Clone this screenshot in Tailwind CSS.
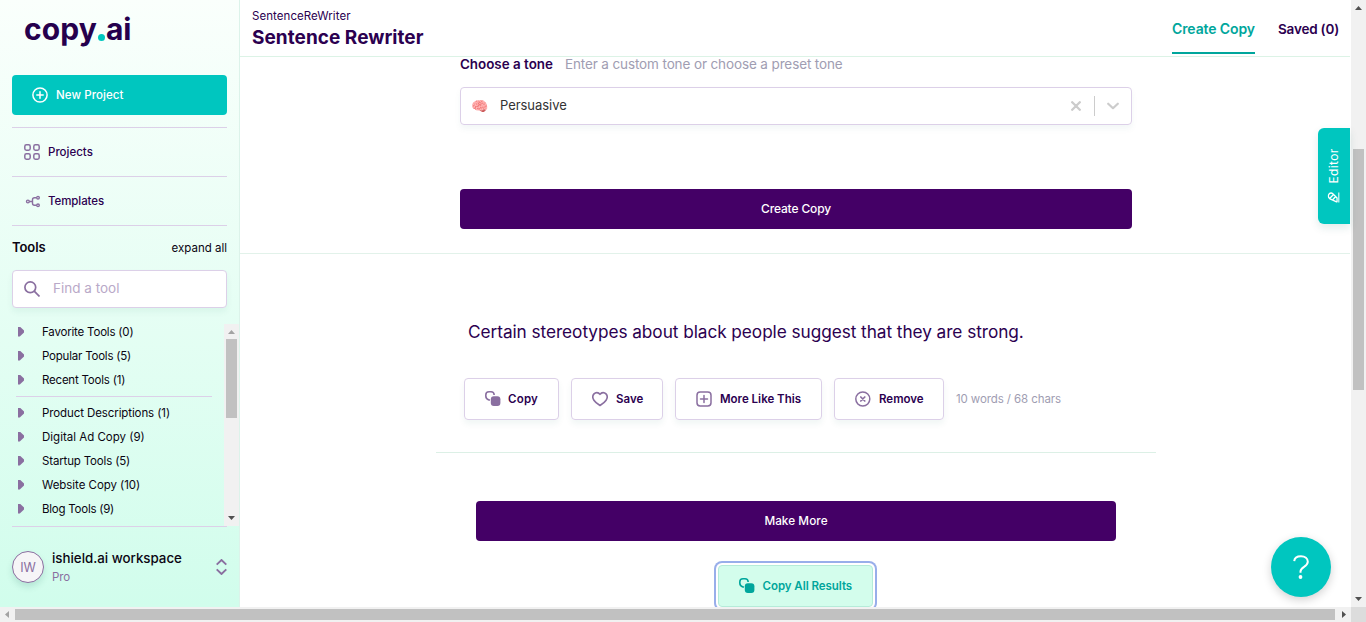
<!DOCTYPE html>
<html lang="en">
<head>
<meta charset="utf-8">
<title>Sentence Rewriter</title>
<script src="https://cdn.jsdelivr.net/npm/@tailwindcss/browser@4"></script>
</head>
<body class="h-[622px] w-[1366px] overflow-hidden bg-white font-[Inter,sans-serif] text-[11.5px] text-[#2b0050]">
<div class="flex h-[607px]">

  <!-- Sidebar -->
  <aside class="flex w-60 shrink-0 flex-col border-r border-[#dcf3ea] bg-linear-to-b from-[#fafffc] to-[#d1fdec] pl-3">
    <div class="flex h-[75px] items-start pl-3 pt-[11px] text-[30px] leading-9 font-bold text-[#26004d]">
      <span class="tracking-[0.13px]">copy</span><span class="mt-[23px] ml-[1px] h-[7px] w-[7px] rounded-full bg-[#00c7be]"></span><span class="ml-[1px] tracking-[-0.3px]">ai</span>
    </div>
    <button class="mr-3 flex h-10 w-[215px] shrink-0 items-center rounded bg-[#00c6bf] pl-5 font-medium tracking-[0.08px] text-white">
      <svg class="mr-2 h-4 w-4" viewBox="0 0 16 16" fill="none" stroke="currentColor" stroke-width="1.5" stroke-linecap="round"><circle cx="8" cy="8" r="7.1"/><path d="M8 4.8v6.4M4.8 8h6.4"/></svg>
      <span class="pt-0.5">New Project</span>
    </button>
    <nav class="mt-3 w-[215px] font-medium">
      <a class="flex h-[49px] items-center border-t border-[#dcd0e8] pl-3">
        <svg class="mr-2 h-4 w-4 text-[#8a6fa0]" viewBox="0 0 16 16" fill="none" stroke="currentColor" stroke-width="1.5"><rect x=".8" y=".8" width="5.4" height="5.4" rx="1.6"/><rect x="9.8" y=".8" width="5.4" height="5.4" rx="1.6"/><rect x=".8" y="9.8" width="5.4" height="5.4" rx="1.6"/><rect x="9.8" y="9.8" width="5.4" height="5.4" rx="1.6"/></svg>
        <span class="pt-0.5">Projects</span>
      </a>
      <a class="flex h-[49px] items-center border-t border-[#dcd0e8] pl-3 tracking-[-0.09px]">
        <svg class="mr-2 h-4 w-4 text-[#8a6fa0]" viewBox="0 0 16 16" fill="none" stroke="currentColor" stroke-width="1.4"><circle cx="3.9" cy="8.5" r="1.4"/><circle cx="14" cy="4.7" r="1.3"/><circle cx="14" cy="12.3" r="1.3"/><path d="M5.4 8.5h3.1M12.6 4.700H10.500q-2 0-2 2v3.600q0 2 2 2h2.100"/></svg>
        <span class="pt-0.5">Templates</span>
      </a>
    </nav>
    <div class="flex h-[45px] w-[215px] shrink-0 items-center justify-between border-t border-[#dcd0e8] text-[#0b0512]">
      <h2 class="text-[13px] font-semibold tracking-[-0.09px]">Tools</h2>
      <span class="pt-0.5">expand all</span>
    </div>
    <div class="flex h-[38px] w-[215px] shrink-0 items-center rounded border border-[#dcd0e8] bg-white pl-[11px] text-[13.500px] text-[#b9a9c8] shadow-[0_4px_6px_rgba(20,100,90,0.06)]">
      <svg class="mr-[13px] h-4 w-4 text-[#8a6fa0]" viewBox="0 0 16 16" fill="none" stroke="currentColor" stroke-width="1.7"><circle cx="6.300" cy="6.300" r="5.400"/><path d="M10.200 10.200l5.300 5.300"/></svg>
      <span class="pb-0.5">Find a tool</span>
    </div>
    <div class="mt-4 flex h-[202px] shrink-0 text-[#0b0512]">
      <ul class="w-[212px] overflow-hidden">
        <li class="-mt-1 flex h-6 items-center pl-[6px]"><span class="mr-[18px] mb-px h-[10px] w-[6px] bg-[#8a6fa0] [clip-path:polygon(0_0,30%_0,100%_40%,100%_60%,30%_100%,0_100%)]"></span><span class="pt-0.5 tracking-[-0.19px]">Favorite Tools (0)</span></li>
        <li class="flex h-6 items-center pl-[6px]"><span class="mr-[18px] mb-px h-[10px] w-[6px] bg-[#8a6fa0] [clip-path:polygon(0_0,30%_0,100%_40%,100%_60%,30%_100%,0_100%)]"></span><span class="pt-0.5 tracking-[-0.21px]">Popular Tools (5)</span></li>
        <li class="flex h-6 items-center pl-[6px]"><span class="mr-[18px] mb-px h-[10px] w-[6px] bg-[#8a6fa0] [clip-path:polygon(0_0,30%_0,100%_40%,100%_60%,30%_100%,0_100%)]"></span><span class="pt-0.5 tracking-[-0.21px]">Recent Tools (1)</span></li>
        <li class="mt-1 mb-1 ml-1 h-px w-[196px] bg-[#dcd0e8]"></li>
        <li class="flex h-6 items-center pl-[6px]"><span class="mr-[18px] mb-px h-[10px] w-[6px] bg-[#8a6fa0] [clip-path:polygon(0_0,30%_0,100%_40%,100%_60%,30%_100%,0_100%)]"></span><span class="pt-0.5 tracking-[-0.1px]">Product Descriptions (1)</span></li>
        <li class="flex h-6 items-center pl-[6px]"><span class="mr-[18px] mb-px h-[10px] w-[6px] bg-[#8a6fa0] [clip-path:polygon(0_0,30%_0,100%_40%,100%_60%,30%_100%,0_100%)]"></span><span class="pt-0.5">Digital Ad Copy (9)</span></li>
        <li class="flex h-6 items-center pl-[6px]"><span class="mr-[18px] mb-px h-[10px] w-[6px] bg-[#8a6fa0] [clip-path:polygon(0_0,30%_0,100%_40%,100%_60%,30%_100%,0_100%)]"></span><span class="pt-0.5 tracking-[-0.16px]">Startup Tools (5)</span></li>
        <li class="flex h-6 items-center pl-[6px]"><span class="mr-[18px] mb-px h-[10px] w-[6px] bg-[#8a6fa0] [clip-path:polygon(0_0,30%_0,100%_40%,100%_60%,30%_100%,0_100%)]"></span><span class="pt-0.5 tracking-[-0.05px]">Website Copy (10)</span></li>
        <li class="flex h-6 items-center pl-[6px]"><span class="mr-[18px] mb-px h-[10px] w-[6px] bg-[#8a6fa0] [clip-path:polygon(0_0,30%_0,100%_40%,100%_60%,30%_100%,0_100%)]"></span><span class="pt-0.5 tracking-[-0.24px]">Blog Tools (9)</span></li>
      </ul>
      <div class="flex w-[15px] shrink-0 flex-col items-center bg-[#f1f1f1]">
        <svg class="h-[15px] w-[15px]" viewBox="0 0 15 15" fill="#a3a3a3"><path d="M4 10l3.500-4 3.500 4z"/></svg>
        <span class="h-[79px] w-[11px] bg-[#c1c1c1]"></span>
        <svg class="mt-auto h-[15px] w-[15px]" viewBox="0 0 15 15" fill="#505050"><path d="M4 5l3.500 4 3.500-4z"/></svg>
      </div>
    </div>
    <div class="flex h-[81px] w-[215px] shrink-0 items-center border-t border-[#dcd0e8]">
      <span class="mr-2 flex h-8 w-8 items-center justify-center rounded-full border border-[#8a6fa0] bg-[#f6f5f7] pt-0.5 text-[12.500px] text-[#8a6fa0] shadow-[0_4px_6px_rgba(20,100,90,0.15)]">IW</span>
      <div class="-mt-px">
        <p class="text-[13.300px] leading-[19px] font-medium text-[#0b0512]">ishield.ai workspace</p>
        <p class="pt-px leading-4 tracking-[-0.1px] text-[#8a6fa0]">Pro</p>
      </div>
      <svg class="ml-auto h-4 w-[11px]" viewBox="0 0 11 16" fill="none" stroke="#8a6fa0" stroke-width="1.900"><path d="M.7 5.600L5.500 1l4.800 4.600M.7 10.400L5.500 15l4.800-4.600"/></svg>
    </div>
  </aside>

  <!-- Main column -->
  <main class="flex w-[1110px] shrink-0 flex-col overflow-hidden">
    <header class="flex h-[57px] shrink-0 justify-between border-b border-[#dcf3e6] pr-[11px] pl-3">
      <div class="pt-[7px]">
        <p class="leading-[18px] tracking-[0.06px]">SentenceReWriter</p>
        <h1 class="pt-px text-[19px] leading-6 font-bold tracking-[0.04px]">Sentence Rewriter</h1>
      </div>
      <div class="flex text-[14px] font-semibold">
        <span class="h-[54px] w-[83px] border-b-2 border-[#00a69c] pt-[18px] leading-[21px] tracking-[-0.11px] whitespace-nowrap text-[#00a69c]">Create Copy</span>
        <span class="ml-[23px] w-[61px] pt-[19px] text-[13.500px] leading-[21px] tracking-[-0.2px] whitespace-nowrap">Saved (0)</span>
      </div>
    </header>

    <section class="h-[197px] shrink-0 border-b border-[#e2f2ea] pl-[220px]">
      <p class="flex h-[30px] items-start leading-[14px]"><b class="mr-3 text-[13.400px] font-semibold">Choose a tone</b><span class="text-[13.500px] tracking-[-0.12px] text-[#a09db2]">Enter a custom tone or choose a preset tone</span></p>
      <div class="flex h-[38px] w-[672px] items-center rounded border border-[#dcd0e8] pl-[10px] text-[13px] text-[#333] shadow-[0_4px_6px_rgba(20,100,90,0.05)]">
        <span class="mr-[11px] flex h-4 w-[18px] items-center text-[14px] leading-4">🧠</span><span class="tracking-[-0.05px]">Persuasive</span>
        <svg class="ml-auto h-[10px] w-[10px]" viewBox="0 0 10 10" fill="none" stroke="#ccc" stroke-width="2.300" stroke-linecap="round"><path d="M1.200 1.200l7.600 7.600M8.800 1.200L1.200 8.800"/></svg>
        <span class="ml-[13px] h-5 w-px bg-[#ccc]"></span>
        <svg class="mr-3 ml-3 h-[8px] w-[12px]" viewBox="0 0 12 8" fill="none" stroke="#ccc" stroke-width="2.200" stroke-linecap="round" stroke-linejoin="round"><path d="M1.200 1.700L6 6.200l4.800-4.500"/></svg>
      </div>
      <button class="mt-16 flex h-10 w-[672px] items-center justify-center rounded bg-[#440066] text-[12px] font-medium tracking-[-0.14px] text-white">Create Copy</button>
    </section>

    <section class="ml-[196px] h-[199px] w-[720px] shrink-0 border-b border-[#dcf0e6] pt-[66px] pl-7">
      <p class="pl-1 text-[17.250px] leading-6 tracking-[-0.065px] whitespace-nowrap">Certain stereotypes about black people suggest that they are strong.</p>
      <div class="mt-[34px] flex items-center gap-3 font-semibold">
        <button class="flex h-[42px] w-[95px] items-center rounded border border-[#dcd0e8] pl-5 tracking-[0.2px] shadow-[0_4px_6px_rgba(20,100,90,0.06)]">
          <svg class="mr-[7px] h-4 w-4 text-[#8a6fa0]" viewBox="0 0 16 16"><path d="M5 9H4Q.800 8 .8 5V4Q.8 .8 4 .8h2Q9 .8 9.200 4" fill="none" stroke="currentColor" stroke-width="1.600"/><rect x="5.800" y="5.300" width="9.600" height="9.800" rx="3" fill="currentColor"/></svg><span class="pt-0.5">Copy</span></button>
        <button class="flex h-[42px] w-[92px] items-center rounded border border-[#dcd0e8] pl-5 shadow-[0_4px_6px_rgba(20,100,90,0.06)]">
          <svg class="mr-2 h-4 w-4" viewBox="0 0 16 16" fill="none" stroke="#8a6fa0" stroke-width="1.600" stroke-linejoin="round"><path d="M8 3.400C6.300 1 3.600 1.200 2 2.900.5 4.600.6 7.300 1.900 9.200 3.400 11.500 5.600 13 8 14.500c2.400-1.500 4.600-3 6.100-5.300 1.300-1.900 1.400-4.600-.1-6.300C12.400 1.200 9.700 1 8 3.400z"/></svg><span class="pt-0.5">Save</span></button>
        <button class="flex h-[42px] w-[147px] items-center rounded border border-[#dcd0e8] pl-5 whitespace-nowrap shadow-[0_4px_6px_rgba(20,100,90,0.06)]">
          <svg class="mr-2 h-4 w-4" viewBox="0 0 16 16" fill="none" stroke="#8a6fa0" stroke-width="1.500" stroke-linecap="round"><rect x="1" y="1" width="14" height="14" rx="3.200"/><path d="M8 4.500v7M4.500 8h7"/></svg><span class="pt-0.5">More Like This</span></button>
        <button class="flex h-[42px] w-[110px] items-center rounded border border-[#dcd0e8] pl-5 shadow-[0_4px_6px_rgba(20,100,90,0.06)]">
          <svg class="mr-2 h-4 w-4" viewBox="0 0 16 16" fill="none" stroke="#8a6fa0" stroke-width="1.500" stroke-linecap="round"><circle cx="7.800" cy="8" r="7"/><path d="M5.800 6l4 4M9.800 6l-4 4" stroke-width="1.700"/></svg><span class="pt-0.5">Remove</span></button>
        <span class="pt-0.5 font-normal tracking-[-0.1px] text-[#a09db2]">10 words / 68 chars</span>
      </div>
    </section>

    <section class="ml-[236px] flex w-[640px] flex-col items-center pt-12 font-medium">
      <button class="h-10 w-full rounded bg-[#440066] pt-0.5 text-[11.750px] tracking-[0.05px] text-white">Make More</button>
      <button class="mt-6 mr-[2px] flex h-[42px] w-[155px] shrink-0 items-center rounded border border-[#b5ecd9] bg-[#d3fdec] pl-5 font-semibold tracking-[-0.05px] whitespace-nowrap text-[#00a69c] ring-2 ring-[#98aeea] ring-offset-2">
        <svg class="mr-2 h-4 w-4" viewBox="0 0 16 16"><path d="M5 9H4Q.800 8 .8 5V4Q.8 .8 4 .8h2Q9 .8 9.200 4" fill="none" stroke="currentColor" stroke-width="1.600"/><rect x="5.800" y="5.300" width="9.600" height="9.800" rx="3" fill="currentColor"/></svg><span class="pt-0.5">Copy All Results</span></button>
    </section>
  </main>

  <!-- Vertical scrollbar -->
  <div class="ml-px flex w-[15px] shrink-0 flex-col items-center bg-[#f1f1f1]">
    <svg class="h-[15px] w-[15px]" viewBox="0 0 15 15" fill="#505050"><path d="M4 10l3.500-4 3.500 4z"/></svg>
    <span class="mt-[134px] h-[241px] w-[11px] bg-[#c1c1c1]"></span>
    <svg class="mt-auto h-[15px] w-[15px]" viewBox="0 0 15 15" fill="#505050"><path d="M4 5l3.500 4 3.500-4z"/></svg>
  </div>
</div>

<!-- Horizontal scrollbar -->
<div class="flex h-[15px] items-center bg-[#f1f1f1]">
  <svg class="h-[15px] w-[15px]" viewBox="0 0 15 15" fill="#a3a3a3"><path d="M9 4L5 7.500 9 11z"/></svg>
  <span class="h-[11px] w-[1320px] bg-[#c1c1c1]"></span>
  <svg class="h-[15px] w-4" viewBox="0 0 16 15" fill="#505050"><path d="M7 4l4 3.500L7 11z"/></svg>
  <span class="h-[15px] w-[15px] bg-[#dcdcdc]"></span>
</div>

<!-- Floating controls -->
<button class="absolute top-32 left-[1318px] flex h-24 w-8 items-center justify-center rounded-l-md bg-[#00c6bf] text-white shadow-[0_4px_8px_rgba(20,100,90,0.12)]">
  <span class="flex -rotate-90 items-center gap-2 text-[12px] tracking-[0.35px]">
    <svg class="h-3 w-3 shrink-0 rotate-90" viewBox="0 0 12 12" fill="none" stroke="currentColor" stroke-width="1.300" stroke-linejoin="round"><path d="M9 10.300L2 7Q-.200 4.500 1.500 2.500 3.500.5 5.500 2.500L9.500 6.500V10.300zM2.500 6.500L6 3M5 8.500L8 5M11.400 1v10"/></svg>Editor</span>
</button>
<button class="absolute top-[537px] left-[1271px] flex h-[60px] w-[60px] items-center justify-center rounded-full bg-[#00c6bf] shadow-[0_3px_10px_rgba(0,0,0,0.18)]">
  <svg class="h-6 w-4" viewBox="0 0 16 24" fill="none" stroke="#fff" stroke-width="2"><path d="M1.200 6.200C1.500 2.800 4.300 1.200 8 1.200c4 0 6.800 2.200 6.800 5.600 0 5.200-7.300 4.800-7.300 9.700v1.200"/><circle cx="7.500" cy="22" r="1.900" fill="#fff" stroke="none"/></svg>
</button>
</body>
</html>
